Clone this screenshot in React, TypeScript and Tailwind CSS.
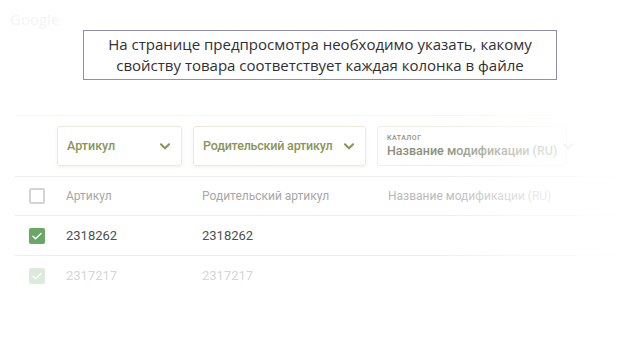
import React from 'react';

const Chevron = ({ className }: { className?: string }) => (
  <svg className={className} width="14" height="14" viewBox="0 0 24 24" fill="none" stroke="currentColor" strokeWidth={3.5} strokeLinecap="round" strokeLinejoin="round">
    <path d="M5 9l7 7 7-7" />
  </svg>
);

const Check = () => (
  <svg width="12" height="12" viewBox="0 0 24 24" fill="none" stroke="white" strokeWidth={3} strokeLinecap="round" strokeLinejoin="round">
    <path d="M4 12.5l5 5L20 7" />
  </svg>
);

const App = () => {
  return (
    <div className="relative w-[640px] h-[360px] overflow-hidden bg-white" style={{ fontFamily: 'Roboto, sans-serif' }}>
      {/* faint watermark */}
      <div className="absolute left-[10px] top-[8px] text-[15px] text-[#f4f4f4] font-['Open_Sans',sans-serif]">Google</div>

      {/* caption */}
      <div className="flex justify-center pt-[30px]">
        <div className="w-[474px] h-[50px] border border-[#8f8fac] flex flex-col justify-center items-center text-[15px] leading-[21px] text-[#2f2f35] font-['Open_Sans',sans-serif]">
          <span>На странице предпросмотра необходимо указать, какому</span>
          <span>свойству товара соответствует каждая колонка в файле</span>
        </div>
      </div>

      {/* table */}
      <div className="mt-[35px] ml-[15px] w-[600px] border-t border-[#f6f6f6]">
        <div className="flex items-center gap-[11px] pl-[42px] pt-[10px] pb-[10px] border-b border-[#ececec]">
          <div className="w-[125px] h-[40px] rounded-[3px] border border-[#ecebd9] shadow-[0_1px_3px_rgba(200,200,170,0.25)] flex items-center justify-between pl-[9px] pr-[9px]">
            <span className="text-[12.5px] font-medium text-[#8a9558] whitespace-nowrap">Артикул</span>
            <Chevron className="text-[#8a9558]" />
          </div>
          <div className="w-[173px] h-[40px] rounded-[3px] border border-[#ecebd9] shadow-[0_1px_3px_rgba(200,200,170,0.25)] flex items-center justify-between pl-[9px] pr-[9px]">
            <span className="text-[12.5px] font-medium tracking-[-0.2px] text-[#8a9558] whitespace-nowrap">Родительский артикул</span>
            <Chevron className="text-[#8a9558]" />
          </div>
          <div className="w-[190px] h-[40px] rounded-[3px] border border-[#efefe4] flex items-center gap-[4px] pl-[9px]">
            <div className="flex flex-col leading-none">
              <span className="text-[7px] font-medium tracking-[0.5px] text-[#8f9270]">КАТАЛОГ</span>
              <span className="mt-[3px] text-[12.5px] font-medium text-[#8c8f7c] whitespace-nowrap">Название модификации (RU)</span>
            </div>
            <Chevron className="text-[#d0d0d0] shrink-0" />
          </div>
        </div>

        <div className="flex items-center h-[39px] border-b border-[#ececec]">
          <div className="w-[51px] pl-[14px]">
            <div className="w-[16px] h-[16px] rounded-[2px] border-2 border-[#d4d4d4]" />
          </div>
          <span className="w-[136px] text-[12px] text-[#a7a7a7]">Артикул</span>
          <span className="w-[186px] text-[12px] text-[#a7a7a7]">Родительский артикул</span>
          <span className="text-[12px] text-[#b9b9b9]">Название модификации (RU)</span>
        </div>

        <div className="flex items-center h-[40px] border-b border-[#ededed]">
          <div className="w-[51px] pl-[14px]">
            <div className="w-[16px] h-[16px] rounded-[2px] bg-[#69a764] flex items-center justify-center">
              <Check />
            </div>
          </div>
          <span className="w-[136px] text-[13px] text-[#4f4f4f]">2318262</span>
          <span className="w-[186px] text-[13px] text-[#4f4f4f]">2318262</span>
        </div>

        <div className="flex items-center h-[40px]">
          <div className="w-[51px] pl-[14px]">
            <div className="w-[16px] h-[16px] rounded-[2px] bg-[#dbeadb] flex items-center justify-center">
              <Check />
            </div>
          </div>
          <span className="w-[136px] text-[13px] text-[#d6d6d6]">2317217</span>
          <span className="w-[186px] text-[13px] text-[#d6d6d6]">2317217</span>
        </div>
      </div>

      {/* fade overlay on the right */}
      <div className="pointer-events-none absolute top-[110px] left-[440px] w-[200px] h-[200px] bg-gradient-to-r from-transparent via-white/70 to-white" />
    </div>
  );
};

export default App;
